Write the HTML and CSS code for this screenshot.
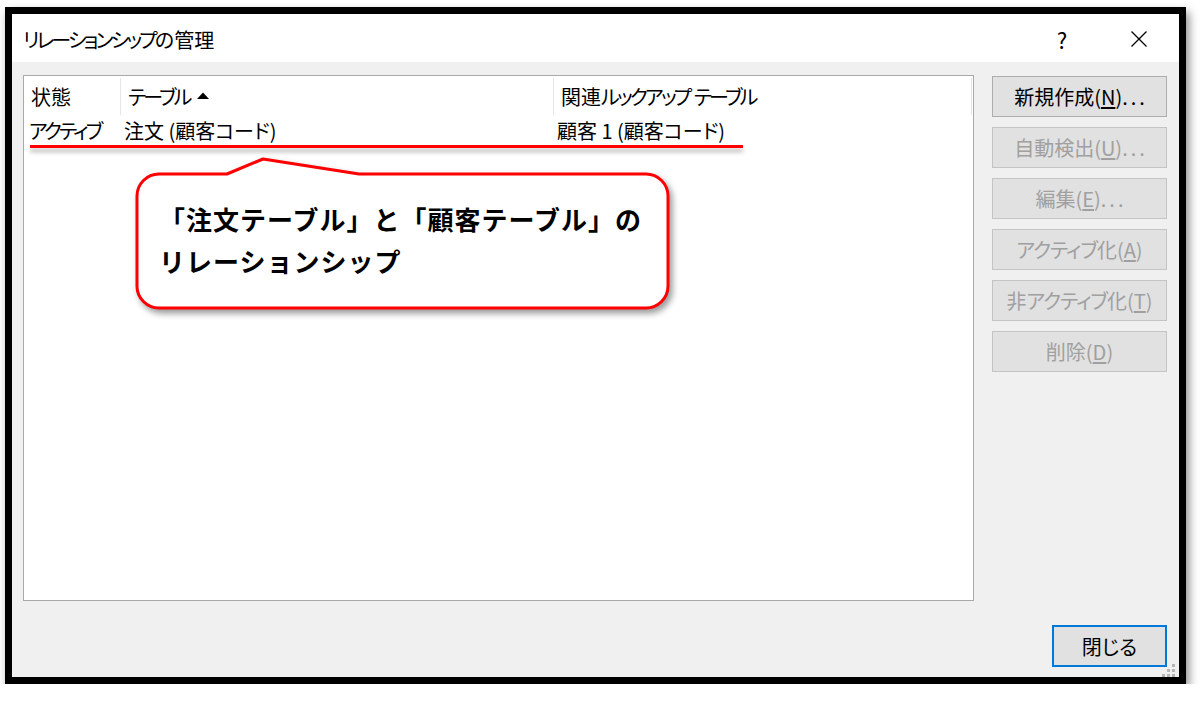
FILE: index.html
```html
<!DOCTYPE html>
<html lang="ja">
<head>
<meta charset="utf-8">
<title>リレーションシップの管理</title>
<link rel="stylesheet" href="styles.css">
</head>
<body>
<div class="frame">
  <div class="titlebar">
    <div class="title"><span class="k">リレーションシップ</span>の管理</div>
    <div class="tb-btn help">?</div>
    <div class="tb-btn x">
      <svg width="16" height="16" viewBox="0 0 16 16"><path d="M0.5 0.5 L15.5 15.5 M15.5 0.5 L0.5 15.5" stroke="#000" stroke-width="1.3" fill="none"/></svg>
    </div>
  </div>
  <div class="body">
    <div class="main">
      <div class="list">
        <div class="hdr">
          <div class="hc">状態</div>
          <div class="hc"><span class="k">テーブル</span><svg class="arrow" width="12" height="7" viewBox="0 0 12 7"><path d="M0 7 L6 0.5 L12 7 Z" fill="#000"/></svg></div>
          <div class="hc">関連<span class="k">ルックアップ</span><span class="sp"> </span><span class="k">テーブル</span></div>
        </div>
        <div class="row">
          <div class="rc c1"><span class="k">アクティブ</span></div>
          <div class="rc">注文 (顧客コード)</div>
          <div class="rc">顧客 1 (顧客コード)</div>
        </div>
        <div class="mark"></div>
        <div class="callout">
          <svg class="bubble" width="550" height="170" viewBox="0 0 550 170">
            <path d="M29 24 L97 24 L133 9 L229 24 L516 24 A22 22 0 0 1 538 46 L538 136 A22 22 0 0 1 516 158 L29 158 A22 22 0 0 1 7 136 L7 46 A22 22 0 0 1 29 24 Z" fill="#fff" stroke="#ff0000" stroke-width="3" stroke-linejoin="round"/>
          </svg>
          <div class="callout-text">「注文テーブル」と「顧客テーブル」の<br>リレーションシップ</div>
        </div>
      </div>
      <div class="side">
        <div class="btn">新規作成(<u>N</u>)<span class="dots">...</span></div>
        <div class="btn dis">自動検出(<u>U</u>)<span class="dots">...</span></div>
        <div class="btn dis">編集(<u>E</u>)<span class="dots">...</span></div>
        <div class="btn dis"><span class="kb">アクティブ</span>化(<u>A</u>)</div>
        <div class="btn dis">非<span class="kb">アクティブ</span>化(<u>T</u>)</div>
        <div class="btn dis">削除(<u>D</u>)</div>
      </div>
    </div>
    <div class="foot">
      <div class="btn close">閉じる</div>
    </div>
    <svg class="grip" width="13" height="13" viewBox="0 0 13 13">
      <rect x="10" y="0" width="3" height="3" fill="#b5b5b5"/>
      <rect x="5" y="5" width="3" height="3" fill="#b5b5b5"/>
      <rect x="10" y="5" width="3" height="3" fill="#b5b5b5"/>
      <rect x="0" y="10" width="3" height="3" fill="#b5b5b5"/>
      <rect x="5" y="10" width="3" height="3" fill="#b5b5b5"/>
      <rect x="10" y="10" width="3" height="3" fill="#b5b5b5"/>
    </svg>
  </div>
</div>
</body>
</html>
```
FILE: styles.css
```css
* { box-sizing: border-box; }
html, body { margin: 0; padding: 0; background: #fff; }
body {
  font-family: "Noto Sans CJK JP", "Noto Sans", sans-serif;
  font-feature-settings: "palt";
  color: #000;
}
.k { letter-spacing: -2.8px; }
.sp { white-space: pre; }
.kb { letter-spacing: -1px; }
.dots { letter-spacing: 3px; margin-right: -3px; }
.frame {
  margin: 7px 0 0 5px;
  width: 1181px;
  height: 677px;
  border: 7px solid #000;
  display: flex;
  flex-direction: column;
  box-shadow: 3px 5px 9px rgba(0, 0, 0, 0.45);
}
.titlebar {
  height: 48px;
  flex: none;
  background: #fff;
  display: flex;
  align-items: center;
  padding: 2px 17px 0 11px;
  font-size: 20px;
}
.title { flex: 1; }
.tb-btn {
  width: 46px;
  display: flex;
  justify-content: center;
  align-items: center;
}
.help { font-size: 22px; margin-right: 31px; font-feature-settings: normal; }
.x svg { display: block; }
.body {
  flex: 1;
  background: #f0f0f0;
  position: relative;
  padding: 13px 12px 10px 11px;
  display: flex;
  flex-direction: column;
}
.main {
  display: flex;
  gap: 18px;
}
.list {
  width: 951px;
  height: 526px;
  border: 1px solid #a9a9a9;
  background: #fff;
  position: relative;
  font-size: 20px;
}
.hdr {
  display: grid;
  grid-template-columns: 97px 433px 418px;
  padding-top: 2px;
  height: 39px;
}
.hc {
  height: 37px;
  border-right: 1px solid #e5e5e5;
  display: flex;
  align-items: center;
  padding-left: 7px;
  white-space: nowrap;
}
.arrow { margin-left: 7px; margin-top: -3px; }
.row {
  display: grid;
  grid-template-columns: 97px 433px 418px;
  height: 30px;
  align-items: center;
}
.rc { padding-left: 3px; white-space: nowrap; }
.rc.c1 { padding-left: 5px; }
.mark {
  position: absolute;
  left: 6px;
  top: 69px;
  width: 713px;
  height: 3px;
  background: #ff0000;
  box-shadow: 0 4px 4px rgba(0, 0, 0, 0.3);
}
.callout {
  position: absolute;
  left: 106px;
  top: 74px;
  width: 550px;
  height: 170px;
}
.bubble {
  position: absolute;
  left: 0;
  top: 0;
  filter: drop-shadow(3px 4px 3px rgba(0, 0, 0, 0.4));
}
.callout-text {
  position: relative;
  padding: 48px 0 0 29px;
  font-size: 26px;
  font-weight: 700;
  line-height: 42px;
  letter-spacing: 1px;
  font-feature-settings: normal;
  white-space: nowrap;
}
.side {
  width: 175px;
  display: flex;
  flex-direction: column;
  gap: 10px;
  padding-top: 1px;
}
.btn {
  height: 41px;
  border: 1px solid #adadad;
  background: #e1e1e1;
  font-size: 20px;
  display: flex;
  align-items: center;
  justify-content: center;
  white-space: nowrap;
}
.btn u { text-underline-offset: 2px; }
.btn.dis {
  color: #a0a0a0;
  border-color: #c4c4c4;
  background: #e1e1e1;
}
.foot {
  display: flex;
  justify-content: flex-end;
  margin-top: 24px;
}
.btn.close {
  width: 115px;
  height: 42px;
  border: 2px solid #0078d7;
}
.grip {
  position: absolute;
  right: 4px;
  bottom: 0;
}
```
